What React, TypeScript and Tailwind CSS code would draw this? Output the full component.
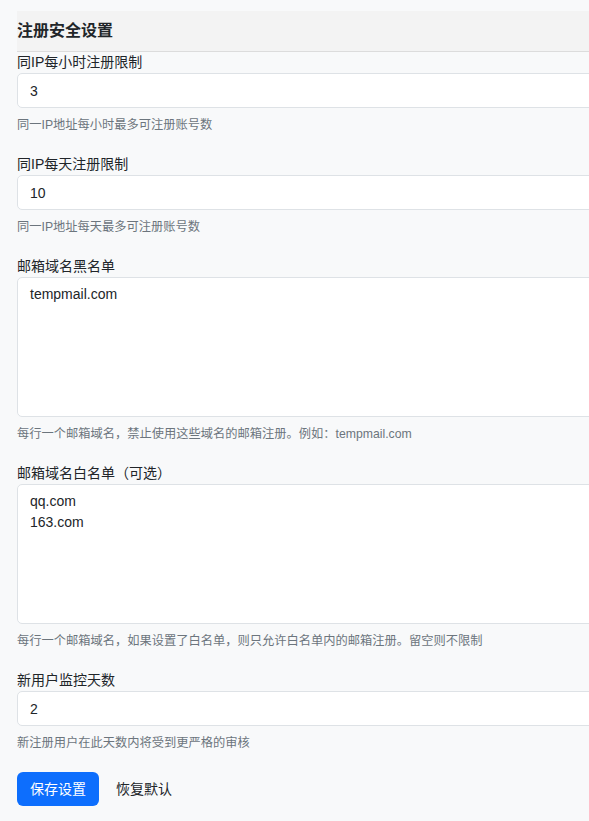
function Field({
  label,
  help,
  children,
}: {
  label: string;
  help: string;
  children: React.ReactNode;
}) {
  return (
    <div className="mb-5">
      <label className="block text-[14px] leading-[21px] text-[#212529]">{label}</label>
      {children}
      <div className="mt-2 text-[12.25px] leading-[18px] text-[#6c757d]">{help}</div>
    </div>
  );
}

const inputCls =
  "block w-full rounded-[5px] border border-[#dee2e6] bg-white px-3 text-[14px] text-[#212529] outline-none";

export default function App() {
  return (
    <div className="min-h-screen w-[589px] overflow-hidden bg-[#f8f9fa] font-['Liberation_Sans','Noto_Sans_CJK_SC',sans-serif]">
      <div className="w-[900px] pl-[17px] pt-[11px]">
        {/* Card header */}
        <div className="flex h-[41px] items-center border-b border-[#dcdcdc] bg-[#f3f3f3]">
          <h2 className="text-[16px] font-bold text-[#212529]">注册安全设置</h2>
        </div>

        <Field label="同IP每小时注册限制" help="同一IP地址每小时最多可注册账号数">
          <input className={`${inputCls} h-[35px]`} defaultValue="3" />
        </Field>

        <Field label="同IP每天注册限制" help="同一IP地址每天最多可注册账号数">
          <input className={`${inputCls} h-[35px]`} defaultValue="10" />
        </Field>

        <Field
          label="邮箱域名黑名单"
          help="每行一个邮箱域名，禁止使用这些域名的邮箱注册。例如：tempmail.com"
        >
          <textarea
            className={`${inputCls} h-[140px] resize-none py-[6px] leading-[21px]`}
            defaultValue="tempmail.com"
          />
        </Field>

        <Field
          label="邮箱域名白名单（可选）"
          help="每行一个邮箱域名，如果设置了白名单，则只允许白名单内的邮箱注册。留空则不限制"
        >
          <textarea
            className={`${inputCls} h-[140px] resize-none py-[6px] leading-[21px]`}
            defaultValue={"qq.com\n163.com"}
          />
        </Field>

        <Field label="新用户监控天数" help="新注册用户在此天数内将受到更严格的审核">
          <input className={`${inputCls} h-[35px]`} defaultValue="2" />
        </Field>

        {/* Actions */}
        <div className="flex items-center gap-[17px]">
          <button className="h-[34px] rounded-[6px] bg-[#0d6efd] px-[13px] text-[14px] text-white">
            保存设置
          </button>
          <button className="h-[34px] text-[14px] text-[#212529]">恢复默认</button>
        </div>
      </div>
    </div>
  );
}
